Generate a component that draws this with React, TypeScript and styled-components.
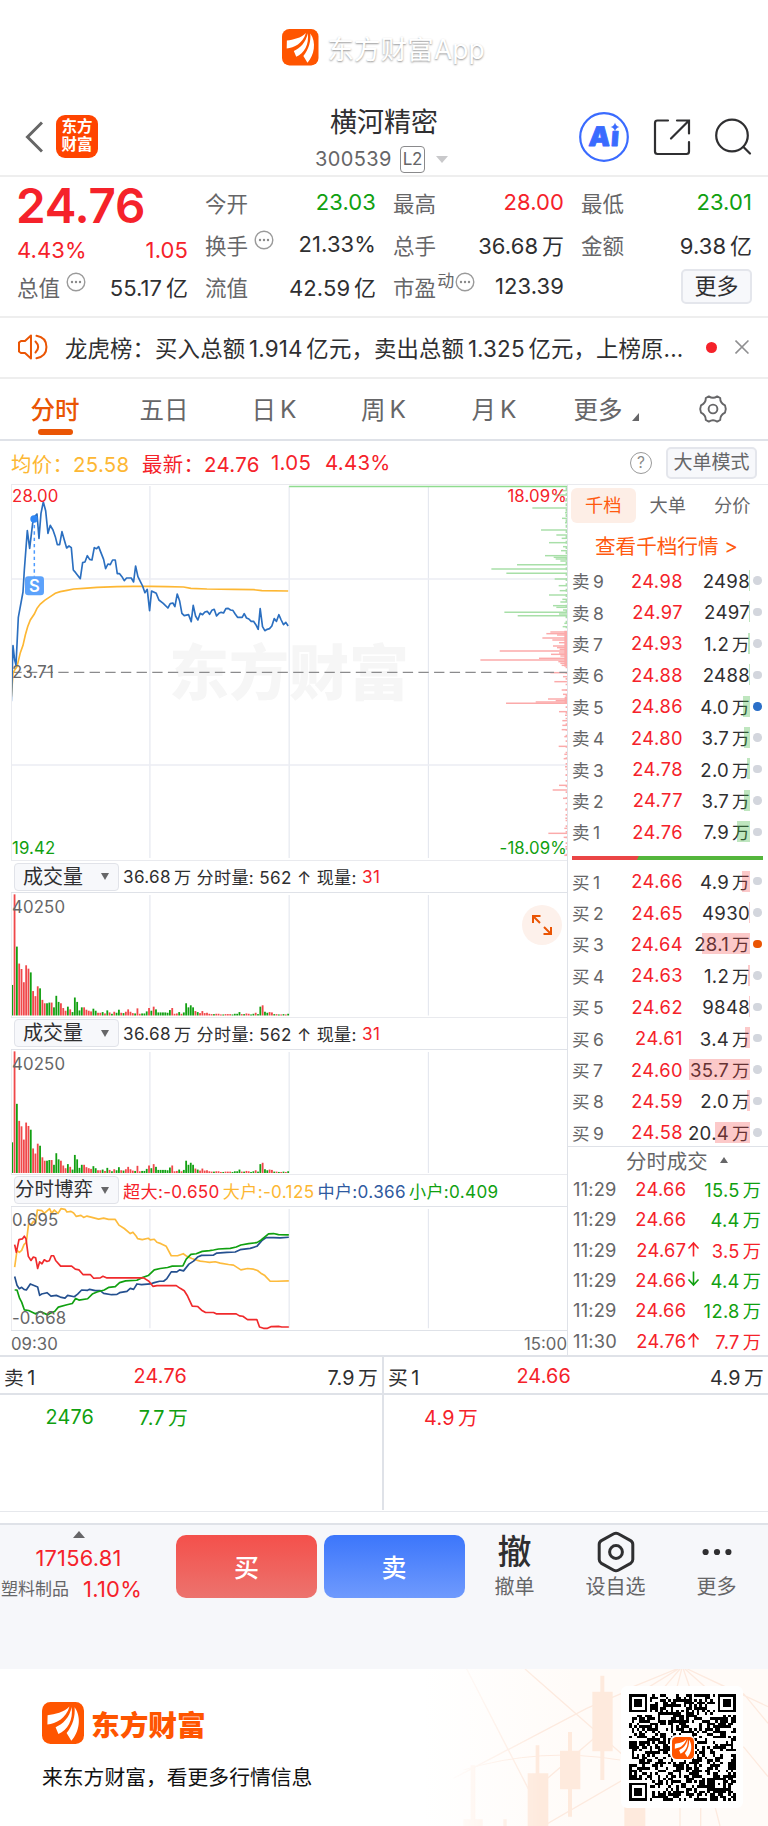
import React from 'react';
import styled, { createGlobalStyle } from 'styled-components';

const RED = '#f5222a';
const GREEN = '#10a010';
const GREY = '#666668';
const INK = '#2f2f31';
const LINE = '#dfe2e8';
const ORANGE = '#ea5504';
const BRAND = '#ff5500';

const Global = createGlobalStyle`
  *, *::before, *::after { box-sizing: border-box; }
  body {
    margin: 0;
    background: #fff;
    color: ${INK};
    font-family: Inter, "Noto Sans CJK SC", sans-serif;
    -webkit-font-smoothing: antialiased;
  }
`;

const Page = styled.main`
  width: 768px;
  height: 1826px;
  overflow: hidden;
  display: flex;
  flex-direction: column;
  white-space: nowrap;
`;

/* ---------- text helpers ---------- */

const Piece = styled.span<{ $gap: boolean }>`
  margin-left: ${(p) => (p.$gap ? '0.17em' : '0')};
`;

const Mixed = ({ text }: { text: string }) => (
  <>
    {text
      .split(/(?<=[\u4e00-\u9fa5])(?=[A-Z\d])|(?<=\d)(?=[\u4e00-\u9fa5])/)
      .map((part, i) => (
        <Piece key={i} $gap={i > 0}>
          {part}
        </Piece>
      ))}
  </>
);

const Triangle = styled.i<{ $up?: boolean; $w: number; $h: number; $color: string }>`
  display: block;
  flex: none;
  width: 0;
  height: 0;
  border-left: ${(p) => p.$w / 2}px solid transparent;
  border-right: ${(p) => p.$w / 2}px solid transparent;
  ${(p) => (p.$up ? 'border-bottom' : 'border-top')}: ${(p) => p.$h}px solid ${(p) => p.$color};
`;

/* ---------- brand ---------- */

const SwooshLogo = ({ size }: { size: number }) => (
  <svg width={size} height={size} viewBox="0 0 42 42" fill="none">
    <rect width="42" height="42" rx="8.5" fill={BRAND} />
    <g fill="#fff">
      <path d="M27.5 4.5C22 10.5 13 12 5.6 13.2L5.4 22.4C14 21.6 24 16.5 27.5 4.5Z" />
      <path d="M29.6 5C27.6 15.5 21 22 13.6 25.2L16.4 32C25.5 28 31.5 18 29.6 5Z" />
      <path d="M32.6 5.2C33.4 14 30.8 23.5 24.6 31L29.3 38.8C37 30.5 40 15.5 32.6 5.2Z" />
    </g>
  </svg>
);

const BrandBar = styled.header`
  flex: none;
  height: 95px;
  display: flex;
  align-items: center;
  gap: 9px;
  padding-left: 282px;
`;

const BrandName = styled.span`
  font-size: 26.5px;
  color: #fff;
  letter-spacing: 0.1px;
  text-shadow: 0 1px 2px rgba(0, 0, 0, 0.42);
`;

/* ---------- navigation ---------- */

const Nav = styled.nav`
  flex: none;
  height: 82px;
  border-bottom: 2px solid #eeeeee;
  display: grid;
  grid-template-columns: 250px 1fr 250px;
  align-items: center;
`;

const NavLeft = styled.div`
  display: flex;
  align-items: center;
  gap: 13px;
  padding: 3px 0 0 25px;
`;

const AppBadge = styled.div`
  width: 42px;
  height: 43px;
  border-radius: 9px;
  background: #ff4400;
  color: #fff;
  font-size: 15.5px;
  font-weight: 700;
  line-height: 18px;
  text-align: center;
  padding-top: 3px;
`;

const NavTitle = styled.div`
  text-align: center;
  padding-top: 10px;
`;

const StockName = styled.h1`
  margin: 0;
  font-size: 27px;
  font-weight: 400;
  line-height: 36px;
`;

const StockCode = styled.div`
  display: flex;
  align-items: center;
  height: 34px;
  padding: 2px 0 0 65px;
  font-size: 20px;
  color: ${GREY};
  letter-spacing: 0.4px;
`;

const LevelTag = styled.span`
  width: 25px;
  height: 27px;
  margin: 0 11px 0 8px;
  border: 1.5px solid #8a8a8c;
  border-radius: 4px;
  font-size: 17px;
  line-height: 25px;
  letter-spacing: -0.3px;
  text-align: center;
`;

const NavRight = styled.div`
  display: flex;
  align-items: center;
  justify-content: flex-end;
  gap: 23.5px;
  padding: 3px 16px 0 0;
`;

const AiIcon = () => (
  <svg width="50" height="50" viewBox="0 0 50 50">
    <circle cx="25" cy="25" r="23.8" fill="none" stroke="#3a6bff" strokeWidth="2.2" />
    <text
      x="10"
      y="33.8"
      fontFamily="Inter"
      fontSize="27"
      fontWeight="900"
      letterSpacing="1"
      fill="#3a6bff"
      stroke="#3a6bff"
      strokeWidth="0.9"
      strokeLinejoin="round"
      transform="skewX(-4) translate(1.5 0)"
    >
      Aı
    </text>
    <path d="M36 10.5Q36.8 14.2 40.5 15Q36.8 15.8 36 19.5Q35.2 15.8 31.5 15Q35.2 14.2 36 10.5Z" fill="#3a6bff" />
  </svg>
);

const ShareIcon = () => (
  <svg width="38" height="38" viewBox="0 0 38 38" fill="none" stroke="#2f2f31" strokeWidth="2.2" strokeLinecap="round">
    <path d="M15 2.5H4.5Q2 2.5 2 5V33.5Q2 36 4.5 36H33.5Q36 36 36 33.5V24" />
    <path d="M24 2.5H36V15.5M35.5 3L18 20.5" />
  </svg>
);

const SearchIcon = () => (
  <svg width="38" height="38" viewBox="0 0 38 38" fill="none" stroke="#2f2f31" strokeWidth="2.2" strokeLinecap="round">
    <circle cx="18" cy="17.5" r="15.8" />
    <path d="M29.5 29L36 35.5" />
  </svg>
);

/* ---------- quote ---------- */

const Quote = styled.section`
  flex: none;
  height: 141px;
  border-bottom: 2px solid #eeeeee;
  padding: 5px 16px 0 17px;
  display: grid;
  grid-template-columns: repeat(4, 171px);
  column-gap: 17px;
`;

const QuoteColumn = styled.div`
  display: flex;
  flex-direction: column;
  margin-top: -1px;
`;

const Price = styled.div`
  height: 49px;
  line-height: 50px;
  font-size: 47.6px;
  font-weight: 600;
  letter-spacing: -0.2px;
  margin-left: -1px;
  color: ${RED};
`;

const QuoteRow = styled.div<{ $h?: number; $color?: string }>`
  height: ${(p) => p.$h ?? 42}px;
  display: flex;
  align-items: center;
  justify-content: space-between;
  font-size: 22px;
  letter-spacing: 0.1px;
  color: ${(p) => p.$color ?? INK};
`;

const Label = styled.span`
  display: flex;
  align-items: center;
  color: ${GREY};
  font-size: 21.5px;
`;

const Sup = styled.sup`
  font-size: 17px;
  line-height: 20px;
  margin-left: 1px;
  align-self: flex-start;
`;

const DotsSvg = styled.svg`
  margin: 0 0 8px 6px;
`;

const DotsHint = () => (
  <DotsSvg width="20" height="20" viewBox="0 0 20 20">
    <circle cx="10" cy="10" r="8.8" fill="none" stroke="#9a9a9a" strokeWidth="1.4" />
    <g fill="#8a8a8a">
      <circle cx="6" cy="10" r="1.2" />
      <circle cx="10" cy="10" r="1.2" />
      <circle cx="14" cy="10" r="1.2" />
    </g>
  </DotsSvg>
);

const TightHint = styled.span`
  display: flex;
  margin-left: -5px;
`;

const SoftButton = styled.button<{ $w: number; $h: number; $size: number; $color?: string }>`
  width: ${(p) => p.$w}px;
  height: ${(p) => p.$h}px;
  padding: 0;
  border: 2px solid #e4e6ec;
  border-radius: 5px;
  background: #f7f8fb;
  color: ${(p) => p.$color ?? INK};
  font: inherit;
  font-size: ${(p) => p.$size}px;
  line-height: 1;
`;

/* ---------- news ---------- */

const News = styled.section`
  flex: none;
  height: 61px;
  border-bottom: 2px solid #eeeeee;
  display: flex;
  align-items: center;
  padding: 0 19px 1px 17px;
`;

const NewsText = styled.p`
  margin: 0 0 0 17px;
  width: 622px;
  font-size: 22.4px;
  letter-spacing: 0.14px;
`;

const NewsDot = styled.i`
  width: 11px;
  height: 11px;
  border-radius: 50%;
  background: ${RED};
  margin: 0 18px 0 20px;
`;

/* ---------- tabs ---------- */

const Tabs = styled.div`
  flex: none;
  height: 62px;
  border-bottom: 2px solid ${LINE};
  display: flex;
  padding-left: 1px;
`;

const Tab = styled.div<{ $active?: boolean; $w: number }>`
  position: relative;
  width: ${(p) => p.$w}px;
  display: flex;
  align-items: center;
  justify-content: center;
  padding-bottom: 1px;
  font-size: 24.5px;
  font-weight: ${(p) => (p.$active ? 500 : 400)};
  color: ${(p) => (p.$active ? ORANGE : GREY)};

  &::after {
    content: '';
    display: ${(p) => (p.$active ? 'block' : 'none')};
    position: absolute;
    bottom: 4px;
    left: 50%;
    width: 35px;
    height: 6px;
    margin-left: -17.5px;
    border-radius: 3px;
    background: ${ORANGE};
  }
`;

const CornerMark = styled.svg`
  margin: 16px 0 0 9px;
`;

const GearIcon = () => (
  <svg width="30" height="30" viewBox="0 0 30 30" fill="none" stroke={GREY} strokeWidth="1.9" strokeLinejoin="round">
    <circle cx="15" cy="15" r="4.4" />
    <path d="M10.8 2.4Q15 5.2 19.2 2.4L22.2 4Q22 8.8 27 11.4Q28.6 15 27 18.6Q22 21.2 22.2 26L19.2 27.6Q15 24.8 10.8 27.6L7.8 26Q8 21.2 3 18.6Q1.4 15 3 11.4Q8 8.8 7.8 4Z" />
  </svg>
);

/* ---------- average line ---------- */

const InfoBar = styled.div`
  flex: none;
  height: 43px;
  display: flex;
  align-items: center;
  padding: 0 11px;
  font-size: 20.4px;
  letter-spacing: 0.3px;
`;

const InfoItem = styled.span<{ $color: string; $w: number }>`
  width: ${(p) => p.$w}px;
  color: ${(p) => p.$color};
`;

const InfoRight = styled.div`
  margin-left: auto;
  display: flex;
  align-items: center;
  gap: 14px;
  letter-spacing: 0;
`;

const HelpIcon = styled.span`
  width: 22px;
  height: 22px;
  border: 1.5px solid #9a9a9a;
  border-radius: 50%;
  color: #8a8a8a;
  font-size: 15.5px;
  line-height: 19px;
  text-align: center;
`;

/* ---------- market area ---------- */

const Market = styled.section`
  flex: none;
  height: 873px;
  display: flex;
  border-bottom: 2px solid ${LINE};
`;

const Charts = styled.div`
  width: 557px;
  margin-left: 11px;
  border-top: 1.5px solid #e9eaee;
  border-right: 1px solid ${LINE};
`;

const Plot = styled.div<{ $h: number }>`
  position: relative;
  height: ${(p) => p.$h}px;
  border-left: 1px solid #ebecf0;

  > svg {
    display: block;
    width: 100%;
    height: 100%;
  }
`;

const ChartLayer = styled.div`
  position: relative;
  height: 100%;

  > svg {
    display: block;
    width: 100%;
    height: 100%;
  }
`;

const AxisLabel = styled.span<{ $color?: string; $right?: boolean; $bottom?: boolean; $top?: number }>`
  position: absolute;
  ${(p) => (p.$right ? 'right: 0' : 'left: 0')};
  ${(p) => (p.$bottom ? 'bottom: 2px' : `top: ${p.$top ?? 1}px`)};
  font-size: 16.8px;
  line-height: 20px;
  letter-spacing: 0.15px;
  color: ${(p) => p.$color ?? GREY};
`;

const Watermark = styled.span`
  position: absolute;
  left: 157px;
  top: 144px;
  font-size: 60px;
  line-height: 88px;
  font-weight: 900;
  color: #f6f6f6;
`;

const ExpandButton = styled.span`
  position: absolute;
  right: 5px;
  top: 12px;
  width: 40px;
  height: 40px;
  border-radius: 50%;
  background: #fdf1eb;
  display: grid;
  place-items: center;
`;

const IndicatorBar = styled.div`
  height: 33px;
  border-bottom: 1.5px solid ${LINE};
  border-top: 1px solid #e9eaee;
  display: flex;
  align-items: center;
  padding-left: 3px;
  font-size: 17.1px;
  letter-spacing: 0.35px;
`;

const Picker = styled.span<{ $wide?: boolean }>`
  width: 105px;
  height: 28px;
  margin-right: 4px;
  border: 1.5px solid #e1e3e9;
  border-radius: 4px;
  background: #f7f8fb;
  display: flex;
  align-items: center;
  justify-content: space-between;
  padding: 0 9px 0 ${(p) => (p.$wide ? 0 : 8)}px;
  font-size: ${(p) => (p.$wide ? 19.5 : 20)}px;
  letter-spacing: 0;
  line-height: 1;
`;

const Tint = styled.span<{ $color: string; $gap?: number }>`
  color: ${(p) => p.$color};
  margin-right: ${(p) => p.$gap ?? 0}px;
`;

const TimeAxis = styled.div`
  display: flex;
  justify-content: space-between;
  height: 26px;
  line-height: 26px;
  border-top: 1.5px solid ${LINE};
  font-size: 16.8px;
  color: ${GREY};
`;

const pricePath =
  '33,664 38,497 43,540 47,555 54,412 68,336 72,270 81,152 88,205 97,130 104,108 110,102 116,175 122,100 129,66 136,92 143,160 150,136 158,150 165,170 171,194 178,194 185,155 192,180 199,204 206,198 213,203 219,270 226,278 240,296 247,248 254,246 261,227 268,238 275,240 282,203 289,206 295,200 302,218 310,238 316,266 323,252 330,254 337,240 345,240 351,281 358,281 365,290 372,302 379,294 393,294 400,306 406,258 413,290 420,304 427,318 434,338 441,328 448,392 454,333 468,340 476,360 489,370 503,384 510,371 518,369 524,380 531,342 538,362 545,400 552,407 565,404 573,425 579,376 586,408 593,420 600,400 607,404 614,396 621,394 628,403 635,391 642,388 649,408 656,400 663,397 670,399 677,386 684,385 691,390 698,391 705,402 712,412 726,412 732,401 739,414 746,417 753,424 760,424 767,434 774,448 780,386 787,440 794,452 801,448 808,446 815,438 822,416 829,424 836,404 843,420 850,434 857,427 864,438';

const averagePath =
  '33,650 38,580 43,570 50,560 60,518 68,496 75,465 82,440 90,420 102,402 110,385 120,372 133,361 150,350 165,340 180,335 200,331 220,327 250,325 290,322 350,320 400,319 450,319 500,320 550,321 572,325 620,327 700,328 760,329 785,332 864,333';

// [y, length] of resting orders along the right edge
const askDepth: [number, number][] = [
  [45, 38], [32, 20], [84, 104], [115, 15], [150, 78], [165, 32], [188, 54], [212, 18], [227, 66], [232, 40], [237, 34], [243, 20],
  [254, 150], [267, 227], [280, 182], [297, 37], [317, 25], [332, 22], [345, 54], [358, 14], [366, 20], [377, 42], [382, 32], [390, 12],
  [397, 188], [402, 24], [407, 148], [440, 13], [430, 8], [200, 12], [175, 16], [62, 6], [98, 6], [128, 6],
];
const bidDepth: [number, number][] = [
  [456, 50], [461, 62], [465, 30], [474, 74], [480, 44], [488, 24], [498, 42], [503, 30], [508, 22], [513, 202], [519, 24], [523, 48],
  [528, 20], [535, 84], [540, 260], [545, 26], [550, 20], [556, 16], [578, 50], [590, 12], [605, 38], [630, 16], [643, 12], [657, 57],
  [662, 34], [666, 94], [670, 183], [695, 24], [706, 6], [722, 14], [736, 14], [749, 16], [770, 8], [799, 25], [823, 8], [836, 10],
  [860, 6], [885, 4], [916, 24], [930, 43], [955, 12], [990, 5], [1015, 5], [1045, 8], [1060, 56], [1072, 10], [1100, 5], [1126, 8],
];

const Grid = ({ top, bottom }: { top: number; bottom: number }) => (
  <g stroke="#e5e8ef" strokeWidth="3.5">
    <path d={`M449 ${top}V${bottom}M867 ${top}V${bottom}M1285 ${top}V${bottom}`} />
  </g>
);

const PriceChart = () => (
  <svg viewBox="35 15 1666 1125" preserveAspectRatio="none" fill="none">
    <Grid top={18} bottom={1134} />
    <path d="M33 297H1701M33 855H1701" stroke="#ebedf3" strokeWidth="4" />
    <path d="M867 19.5H1701" stroke="#8fdc8f" strokeWidth="4" />
    <g strokeWidth="4.4" stroke="#a8dfa8">
      {askDepth.map(([y, w], i) => (
        <path key={i} d={`M${1701 - w} ${y}H1701`} />
      ))}
      <path d="M1699 22V445" strokeDasharray="9 7" />
    </g>
    <g strokeWidth="4.4" stroke="#fbaaaa">
      {bidDepth.map(([y, w], i) => (
        <path key={i} d={`M${1701 - w} ${y}H1701`} />
      ))}
      <path d="M1697 452V560M1698 650V672" strokeWidth="8" />
      <path d="M1699 560V1125" strokeDasharray="5 12" />
    </g>
    <path d="M33 577H1701" stroke="#8b8b8d" strokeWidth="4" strokeDasharray="31 16" />
    <polyline points={averagePath} stroke="#fdb733" strokeWidth="5" />
    <path d="M102 116V290" stroke="#4d9bff" strokeWidth="4.5" strokeDasharray="10 9" />
    <polyline points={pricePath} stroke="#2b6fc0" strokeWidth="5" strokeLinejoin="round" />
    <circle cx="101" cy="117" r="11" fill="#2f87f5" />
    <rect x="74" y="289" width="57" height="57" rx="10" fill="#5ca2fb" />
    <text x="102.5" y="335" textAnchor="middle" fontFamily="Inter" fontSize="50" fontWeight="600" fill="#fff">
      S
    </text>
  </svg>
);

const volume: string[] =
  `90g 357r 203g 153r 137r 98r 148r 138r 127g 72r 57r 86r 80g 46r 36r 36g 38g 38r 24g 58g 40g 36r 22r 14r 26g 18r 10g 53g 40g 15g
  24g 24r 17r 14r 12r 20g 14g 8r 8r 10g 6r 15g 9r 5g 11r 8g 17g 8r 7g 11r 18r 11r 7r 6g 21r 5r 6g 6g 12g 22r
  14g 26r 18g 9g 9g 9g 9g 8g 16g 22r 5r 6r 10g 5r 9g 36g 24g 30g 24g 13r 10g 7r 13r 7r 8r 5r 4r 4g 5r 5r
  3r 3g 4r 4r 4r 3g 5g 5g 10g 4r 4g 6r 5r 3g 5g 8r 4g 26g 30r 11g 8g 10r 9r 4g 4r 3g 3r 4g 3r 5g`
    .trim()
    .split(/\s+/);

const VolumeChart = () => (
  <svg viewBox="35 104 1666 364" preserveAspectRatio="none" fill="none">
    <Grid top={110} bottom={465} />
    {volume.map((v, i) => {
      const h = parseInt(v, 10);
      return (
        <rect key={i} x={33 + i * 6.96} y={465 - h} width="5.4" height={h} fill={v.endsWith('r') ? '#f0484a' : '#12a012'} />
      );
    })}
  </svg>
);

const flows: { color: string; points: string }[] = [
  {
    color: '#fdbb3c',
    points:
      '43,1222 50,1172 57,1178 64,1172 71,1155 78,1148 85,1092 92,1096 99,1086 106,1090 111,1052 125,1054 132,1062 148,1048 154,1062 162,1052 173,1062 182,1048 194,1050 200,1058 212,1056 220,1061 228,1071 242,1068 250,1074 260,1070 275,1074 295,1079 310,1076 325,1080 345,1080 356,1097 372,1107 390,1122 398,1118 408,1130 412,1137 426,1140 444,1136 450,1141 462,1139 470,1148 482,1152 498,1160 513,1188 532,1188 549,1182 560,1190 575,1196 592,1202 600,1204 615,1206 628,1208 645,1206 660,1210 685,1214 700,1216 722,1230 742,1226 760,1228 772,1232 782,1240 794,1247 810,1264 830,1264 866,1263',
  },
  {
    color: '#24508f',
    points:
      '43,1250 50,1276 57,1286 64,1282 71,1288 78,1290 90,1272 112,1281 118,1306 124,1302 140,1298 152,1308 168,1306 180,1311 194,1314 202,1306 222,1310 232,1302 244,1290 262,1291 268,1288 285,1292 300,1292 310,1300 334,1304 350,1303 358,1298 380,1294 390,1285 400,1288 410,1272 424,1274 450,1272 462,1268 478,1264 490,1264 500,1256 513,1236 530,1236 538,1230 550,1233 566,1213 580,1204 592,1192 604,1187 640,1186 650,1180 680,1178 705,1177 720,1170 750,1166 770,1160 785,1143 798,1134 820,1134 840,1135 866,1133',
  },
  {
    color: '#10a010',
    points:
      '43,1290 50,1290 58,1315 64,1326 72,1349 85,1351 105,1361 120,1354 142,1364 152,1358 163,1354 174,1341 200,1334 216,1330 226,1315 236,1320 262,1316 276,1302 290,1296 312,1290 326,1282 345,1280 358,1268 376,1263 410,1261 424,1254 444,1247 462,1230 480,1226 502,1223 516,1219 548,1218 558,1198 572,1184 588,1182 606,1175 628,1173 640,1171 655,1168 690,1166 708,1162 722,1156 745,1152 770,1149 782,1142 805,1123 820,1122 835,1125 866,1126',
  },
  {
    color: '#f02a2c',
    points:
      '43,1155 48,1178 56,1140 66,1138 72,1130 77,1138 84,1190 92,1202 99,1192 106,1194 112,1226 118,1206 125,1212 132,1200 140,1205 147,1203 153,1188 160,1188 166,1202 181,1219 214,1219 225,1228 236,1230 248,1244 270,1244 280,1255 300,1254 308,1249 320,1254 430,1254 446,1264 458,1279 470,1277 528,1277 540,1285 552,1292 562,1308 576,1338 592,1339 604,1350 616,1357 640,1357 648,1361 708,1361 718,1367 728,1368 742,1378 770,1378 778,1400 790,1404 802,1404 812,1399 835,1398 845,1400 866,1400',
  },
];

const FlowChart = () => (
  <svg viewBox="35 1043 1666 366" preserveAspectRatio="none" fill="none">
    <Grid top={1049} bottom={1404} />
    {flows.map((f) => (
      <polyline key={f.color} points={f.points} stroke={f.color} strokeWidth="5" strokeLinejoin="round" />
    ))}
  </svg>
);

/* ---------- order book ---------- */

const Book = styled.aside`
  width: 200px;
  border-top: 1px solid #e9eaee;
`;

const BookTabs = styled.div`
  display: flex;
  padding: 3px 0 0 3px;
  height: 39px;
`;

const BookTab = styled.span<{ $active?: boolean }>`
  width: 64.5px;
  height: 35px;
  line-height: 34px;
  border-radius: 6px;
  text-align: center;
  font-size: 18.2px;
  color: ${(p) => (p.$active ? '#ff5a10' : GREY)};
  background: ${(p) => (p.$active ? '#fdeee6' : 'none')};
`;

const BookLink = styled.div`
  height: 41px;
  line-height: 45px;
  padding-left: 27px;
  font-size: 20.6px;
  color: #ff5a10;
`;

const BookRow = styled.div`
  position: relative;
  height: 31.4px;
  display: grid;
  grid-template-columns: 40px 75px 67px 1fr;
  align-items: center;
  font-size: 18.3px;
  letter-spacing: 0.45px;
`;

const Side = styled.span`
  color: ${GREY};
  padding-left: 4px;
  font-size: 17.5px;
`;

const BookPrice = styled.span`
  color: ${RED};
  text-align: right;
`;

const Amount = styled.span`
  text-align: right;
  margin-left: -20px;
  letter-spacing: 0.3px;
  font-size: 18.6px;

  span + span {
    font-size: 17.6px;
  }
`;

const Depth = styled.i<{ $w: number; $buy: boolean }>`
  position: absolute;
  right: 18px;
  top: 5px;
  width: ${(p) => p.$w}px;
  height: 21px;
  background: ${(p) => (p.$buy ? 'rgba(245, 60, 60, 0.28)' : 'rgba(60, 180, 60, 0.33)')};
`;

const Dot = styled.i<{ $color: string }>`
  width: 8.5px;
  height: 8.5px;
  margin-left: 3px;
  border-radius: 50%;
  background: ${(p) => p.$color};
`;

const RatioBar = styled.div`
  height: 4px;
  margin: 8px 5px 6px 4px;
  background: linear-gradient(115deg, #ea4545 0 60px, #54b63c 61px);
`;

const sells: [string, string, number][] = [
  ['24.98', '2498', 1], ['24.97', '2497', 1], ['24.93', '1.2万', 2], ['24.88', '2488', 1], ['24.86', '4.0万', 7],
  ['24.80', '3.7万', 6], ['24.78', '2.0万', 3], ['24.77', '3.7万', 6], ['24.76', '7.9万', 13],
];
const buys: [string, string, number][] = [
  ['24.66', '4.9万', 8], ['24.65', '4930', 1], ['24.64', '28.1万', 48], ['24.63', '1.2万', 2], ['24.62', '9848', 1.5],
  ['24.61', '3.4万', 5.5], ['24.60', '35.7万', 61], ['24.59', '2.0万', 3], ['24.58', '20.4万', 35],
];
const dotColors: Record<string, string> = { '24.86': '#2b6fc8', '24.64': ORANGE };

const BookSide = ({ rows, buy }: { rows: [string, string, number][]; buy: boolean }) => (
  <>
    {rows.map(([price, amount, w], i) => (
      <BookRow key={price}>
        <Side>
          <Mixed text={buy ? `买${i + 1}` : `卖${9 - i}`} />
        </Side>
        <BookPrice>{price}</BookPrice>
        <Amount>
          <Mixed text={amount} />
        </Amount>
        <Dot $color={dotColors[price] ?? '#d3d6dd'} />
        <Depth $w={w} $buy={buy} />
      </BookRow>
    ))}
  </>
);

const TradesHead = styled.div`
  margin-top: -2px;
  height: 27.5px;
  border-top: 1.5px solid ${LINE};
  display: flex;
  align-items: center;
  padding-left: 58px;
  gap: 12px;
  font-size: 20.4px;
  color: ${GREY};
`;

const TradeRow = styled.div`
  height: 30.4px;
  display: grid;
  grid-template-columns: 60px 58.5px 13px 62px;
  align-items: center;
  font-size: 18.3px;
  letter-spacing: 0.35px;
`;

const TradeTime = styled.span`
  padding-left: 5px;
  letter-spacing: 0.2px;
  color: ${GREY};
`;

const TradeCell = styled.span<{ $color: string }>`
  color: ${(p) => p.$color};
  text-align: right;
`;

const Arrow = ({ up, color }: { up: boolean; color: string }) => (
  <svg width="13" height="16" viewBox="0 0 13 16" fill="none" stroke={color} strokeWidth="1.6">
    <path d={up ? 'M6.5 15.5V2M1.5 7.5L6.5 2L11.5 7.5' : 'M6.5 .5V14M1.5 8.5L6.5 14L11.5 8.5'} />
  </svg>
);

const trades: [string, string, string, string, string][] = [
  ['11:29', '24.66', '', '15.5万', GREEN],
  ['11:29', '24.66', '', '4.4万', GREEN],
  ['11:29', '24.67', 'up', '3.5万', RED],
  ['11:29', '24.66', 'down', '4.4万', GREEN],
  ['11:29', '24.66', '', '12.8万', GREEN],
  ['11:30', '24.76', 'up', '7.7万', RED],
];

/* ---------- queue ---------- */

const Queue = styled.section`
  flex: none;
  height: 155px;
  display: grid;
  grid-template-columns: 384px 384px;
  border-bottom: 1px solid #e6e8ec;
`;

const QueueSide = styled.div<{ $first?: boolean }>`
  height: 153px;
  border-right: ${(p) => (p.$first ? `2px solid ${LINE}` : 'none')};
`;

const QueueHead = styled.div`
  height: 38px;
  border-bottom: 2px solid ${LINE};
  display: grid;
  grid-template-columns: 80px 103px 1fr;
  align-items: center;
  padding: 2px 4px 0 4px;
  font-size: 19.8px;
  letter-spacing: 0.2px;
  text-align: right;

  > :first-child {
    text-align: left;
  }
`;

const QueueList = styled.div<{ $color: string }>`
  display: grid;
  grid-template-columns: 94px 94px;
  height: 43px;
  align-items: center;
  text-align: right;
  font-size: 19.8px;
  letter-spacing: 0.2px;
  color: ${(p) => p.$color};
`;

/* ---------- bottom bar ---------- */

const Spacer = styled.div`
  flex: none;
  height: 11px;
`;

const ActionBar = styled.section`
  flex: none;
  height: 146px;
  border-top: 2px solid ${LINE};
  background: #f6f7fa;
  display: flex;
`;

const IndexBox = styled.div`
  width: 176px;
  padding-top: 6px;
`;

const IndexValue = styled.div`
  width: 157px;
  display: flex;
  flex-direction: column;
  align-items: center;
  font-size: 21.8px;
  letter-spacing: 0.25px;
  line-height: 24px;
  gap: 8px;
  color: ${RED};
`;

const IndexName = styled.div`
  display: flex;
  align-items: center;
  gap: 14px;
  margin-top: 5px;
  padding-left: 1px;
  font-size: 17px;
  line-height: 28px;
  color: ${GREY};
`;

const IndexChange = styled.span`
  font-size: 22px;
  letter-spacing: 0.25px;
  color: ${RED};
`;

const TradeButton = styled.button<{ $from: string; $to: string }>`
  width: 141px;
  height: 63px;
  margin: 10px 6.5px 0 0;
  padding: 0 0 2px;
  border: 0;
  border-radius: 10px;
  background: linear-gradient(${(p) => p.$from}, ${(p) => p.$to});
  color: #fff;
  font: inherit;
  font-size: 25px;
  font-weight: 500;
`;

const Tool = styled.div<{ $w: number }>`
  width: ${(p) => p.$w}px;
  padding-top: 5px;
  text-align: center;
  font-size: 20px;
  line-height: 27px;
  color: ${GREY};
`;

const ToolIcon = styled.div`
  height: 44px;
  display: grid;
  place-items: center;
  font-size: 34px;
  font-weight: 500;
  line-height: 42px;
  color: ${INK};
`;

/* ---------- footer ---------- */

const Footer = styled.footer`
  position: relative;
  flex: none;
  height: 157px;
  display: flex;
  justify-content: space-between;
  padding: 17px 25px 0 42px;
  background: linear-gradient(90deg, #fff 55%, #fffbf8 75%);
`;

const FooterArt = styled.svg`
  position: absolute;
  right: 0;
  top: 0;
  -webkit-mask-image: linear-gradient(90deg, transparent 12%, #000 38%);
  mask-image: linear-gradient(90deg, transparent 12%, #000 38%);
`;

const FooterBrand = styled.div`
  padding-top: 16px;
  font-size: 20.8px;
  color: #111;
`;

const FooterLogo = styled.div`
  display: flex;
  align-items: center;
  gap: 7px;
  height: 42px;
  margin-bottom: 17px;
  font-size: 28.7px;
  font-weight: 900;
  color: ${BRAND};
`;

const QrCard = styled.div`
  position: relative;
  width: 122px;
  height: 122px;
  padding: 7.5px;
  border-radius: 6px;
  background: #fff;
`;

const QrLogo = styled.span`
  position: absolute;
  left: 49px;
  top: 49px;
  width: 25px;
  height: 25px;
  padding: 1.5px;
  border-radius: 6px;
  background: #fff;
  line-height: 0;
`;

const QR_SIZE = 41;

const finder = (r: number, c: number): boolean | null => {
  for (const [y, x] of [[0, 0], [0, 34], [34, 0]]) {
    const dy = r - y;
    const dx = c - x;
    if (dy >= -1 && dy <= 7 && dx >= -1 && dx <= 7) {
      const d = Math.max(Math.abs(dy - 3), Math.abs(dx - 3));
      return d === 3 || d <= 1;
    }
  }
  const a = Math.max(Math.abs(r - 34), Math.abs(c - 34));
  if (a <= 2) return a !== 1;
  if (r === 6) return c % 2 === 0;
  if (c === 6) return r % 2 === 0;
  return null;
};

const qrPath = (() => {
  let seed = 20477;
  let d = '';
  for (let r = 0; r < QR_SIZE; r++) {
    for (let c = 0; c < QR_SIZE; c++) {
      seed = (seed * 1103515245 + 12345) % 2147483648;
      if (finder(r, c) ?? seed / 2147483648 < 0.5) d += `M${c} ${r}h1v1h-1z`;
    }
  }
  return d;
})();

const App = () => (
  <>
    <Global />
    <Page>
      <BrandBar>
        <SwooshLogo size={36.5} />
        <BrandName>东方财富App</BrandName>
      </BrandBar>

      <Nav>
        <NavLeft>
          <svg width="18" height="32" viewBox="0 0 18 32" fill="none" stroke="#666" strokeWidth="3">
            <path d="M17 1.5L2.5 16L17 30.5" />
          </svg>
          <AppBadge>
            东方
            <br />
            财富
          </AppBadge>
        </NavLeft>
        <NavTitle>
          <StockName>横河精密</StockName>
          <StockCode>
            300539
            <LevelTag>L2</LevelTag>
            <Triangle $w={13} $h={7} $color="#c9c9cb" />
          </StockCode>
        </NavTitle>
        <NavRight>
          <AiIcon />
          <ShareIcon />
          <SearchIcon />
        </NavRight>
      </Nav>

      <Quote>
        <QuoteColumn>
          <Price>24.76</Price>
          <QuoteRow $h={40} $color={RED}>
            <span>4.43%</span>
            <span>1.05</span>
          </QuoteRow>
          <QuoteRow $h={32}>
            <Label>
              总值
              <DotsHint />
            </Label>
            <span>
              <Mixed text="55.17亿" />
            </span>
          </QuoteRow>
        </QuoteColumn>
        <QuoteColumn>
          <QuoteRow>
            <Label>今开</Label>
            <Tint $color={GREEN}>23.03</Tint>
          </QuoteRow>
          <QuoteRow>
            <Label>
              换手
              <DotsHint />
            </Label>
            <span>21.33%</span>
          </QuoteRow>
          <QuoteRow>
            <Label>流值</Label>
            <span>
              <Mixed text="42.59亿" />
            </span>
          </QuoteRow>
        </QuoteColumn>
        <QuoteColumn>
          <QuoteRow>
            <Label>最高</Label>
            <Tint $color={RED}>28.00</Tint>
          </QuoteRow>
          <QuoteRow>
            <Label>总手</Label>
            <span>
              <Mixed text="36.68万" />
            </span>
          </QuoteRow>
          <QuoteRow>
            <Label>
              市盈<Sup>动</Sup>
              <TightHint>
                <DotsHint />
              </TightHint>
            </Label>
            <span>123.39</span>
          </QuoteRow>
        </QuoteColumn>
        <QuoteColumn>
          <QuoteRow>
            <Label>最低</Label>
            <Tint $color={GREEN}>23.01</Tint>
          </QuoteRow>
          <QuoteRow>
            <Label>金额</Label>
            <span>
              <Mixed text="9.38亿" />
            </span>
          </QuoteRow>
          <QuoteRow>
            <span />
            <SoftButton $w={71} $h={35} $size={22}>
              更多
            </SoftButton>
          </QuoteRow>
        </QuoteColumn>
      </Quote>

      <News>
        <svg width="31" height="26" viewBox="0 0 31 26" fill="none" stroke={ORANGE} strokeWidth="2" strokeLinejoin="round" strokeLinecap="round">
          <path d="M2 8.5L4 7H8L14 1.5V24.5L8 19H4L2 17.5Z" />
          <path d="M18.5 7.5Q24 13 18.5 18.5M19.5 1.8Q29.5 3.5 29.5 13T19.5 24.2" />
        </svg>
        <NewsText>
          <Mixed text="龙虎榜：买入总额1.914亿元，卖出总额1.325亿元，上榜原..." />
        </NewsText>
        <NewsDot />
        <svg width="14" height="14" viewBox="0 0 14 14" stroke="#8f8f91" strokeWidth="1.6">
          <path d="M.5 .5L13.5 13.5M13.5 .5L.5 13.5" />
        </svg>
      </News>

      <Tabs>
        <Tab $w={108} $active>
          分时
        </Tab>
        <Tab $w={110}>五日</Tab>
        <Tab $w={110}>
          <Mixed text="日K" />
        </Tab>
        <Tab $w={109}>
          <Mixed text="周K" />
        </Tab>
        <Tab $w={112}>
          <Mixed text="月K" />
        </Tab>
        <Tab $w={112}>
          更多
          <CornerMark width="7" height="8" viewBox="0 0 7 8">
            <path d="M7 0V8H0Z" fill={GREY} />
          </CornerMark>
        </Tab>
        <Tab $w={101}>
          <GearIcon />
        </Tab>
      </Tabs>

      <InfoBar>
        <InfoItem $color="#fdb733" $w={131}>
          均价：25.58
        </InfoItem>
        <InfoItem $color={RED} $w={129}>
          最新：24.76
        </InfoItem>
        <InfoItem $color={RED} $w={54}>
          1.05
        </InfoItem>
        <InfoItem $color={RED} $w={70}>
          4.43%
        </InfoItem>
        <InfoRight>
          <HelpIcon>?</HelpIcon>
          <SoftButton $w={91} $h={32} $size={19} $color={GREY}>
            大单模式
          </SoftButton>
        </InfoRight>
      </InfoBar>

      <Market>
        <Charts>
          <Plot $h={375}>
            <Watermark>东方财富</Watermark>
            <ChartLayer>
              <PriceChart />
            </ChartLayer>
            <AxisLabel $color={RED}>28.00</AxisLabel>
            <AxisLabel $color={RED} $right>
              18.09%
            </AxisLabel>
            <AxisLabel $top={177}>23.71</AxisLabel>
            <AxisLabel $color={GREEN} $bottom>
              19.42
            </AxisLabel>
            <AxisLabel $color={GREEN} $right $bottom>
              -18.09%
            </AxisLabel>
          </Plot>
          {[0, 1].map((n) => (
            <React.Fragment key={n}>
              <IndicatorBar>
                <Picker>
                  成交量
                  <Triangle $w={8} $h={7} $color={GREY} />
                </Picker>
                <Mixed text="36.68万 分时量: 562 ↑ 现量:" />
                &nbsp;<Tint $color={RED}>31</Tint>
              </IndicatorBar>
              <Plot $h={n === 0 ? 123.5 : 124}>
                <VolumeChart />
                <AxisLabel $top={4}>40250</AxisLabel>
                {n === 0 && (
                  <ExpandButton>
                    <svg width="22" height="22" viewBox="0 0 22 22" fill="none" stroke={ORANGE} strokeWidth="2">
                      <path d="M2 9V2H9.5M2.5 2.5L9 9M20 13V20H12.5M19.5 19.5L13 13" />
                    </svg>
                  </ExpandButton>
                )}
              </Plot>
            </React.Fragment>
          ))}
          <IndicatorBar>
            <Picker $wide>
              分时博弈
              <Triangle $w={8} $h={7} $color={GREY} />
            </Picker>
            <Tint $color={RED} $gap={3}>
              超大:-0.650
            </Tint>
            <Tint $color="#fdb733" $gap={3}>
              大户:-0.125
            </Tint>
            <Tint $color="#2f5aa0" $gap={3}>
              中户:0.366
            </Tint>
            <Tint $color={GREEN}>小户:0.409</Tint>
          </IndicatorBar>
          <Plot $h={123}>
            <FlowChart />
            <AxisLabel $top={3}>0.695</AxisLabel>
            <AxisLabel $bottom>-0.668</AxisLabel>
          </Plot>
          <TimeAxis>
            <span>09:30</span>
            <span>15:00</span>
          </TimeAxis>
        </Charts>

        <Book>
          <BookTabs>
            <BookTab $active>千档</BookTab>
            <BookTab>大单</BookTab>
            <BookTab>分价</BookTab>
          </BookTabs>
          <BookLink>查看千档行情 &gt;</BookLink>
          <BookSide rows={sells} buy={false} />
          <RatioBar />
          <BookSide rows={buys} buy />
          <TradesHead>
            分时成交
            <Triangle $up $w={9} $h={6} $color={GREY} />
          </TradesHead>
          {trades.map(([time, price, dir, amount, color], i) => (
            <TradeRow key={i}>
              <TradeTime>{time}</TradeTime>
              <TradeCell $color={RED}>{price}</TradeCell>
              <span>{dir && <Arrow up={dir === 'up'} color={color} />}</span>
              <TradeCell $color={color}>
                <Mixed text={amount} />
              </TradeCell>
            </TradeRow>
          ))}
        </Book>
      </Market>

      <Queue>
        <QueueSide $first>
          <QueueHead>
            <span>
              <Mixed text="卖1" />
            </span>
            <Tint $color={RED}>24.76</Tint>
            <span>
              <Mixed text="7.9万" />
            </span>
          </QueueHead>
          <QueueList $color={GREEN}>
            <span>2476</span>
            <span>
              <Mixed text="7.7万" />
            </span>
          </QueueList>
        </QueueSide>
        <QueueSide>
          <QueueHead>
            <span>
              <Mixed text="买1" />
            </span>
            <Tint $color={RED}>24.66</Tint>
            <span>
              <Mixed text="4.9万" />
            </span>
          </QueueHead>
          <QueueList $color={RED}>
            <span>
              <Mixed text="4.9万" />
            </span>
          </QueueList>
        </QueueSide>
      </Queue>
      <Spacer />

      <ActionBar>
        <IndexBox>
          <IndexValue>
            <Triangle $up $w={12} $h={7} $color={GREY} />
            17156.81
          </IndexValue>
          <IndexName>
            塑料制品
            <IndexChange>1.10%</IndexChange>
          </IndexName>
        </IndexBox>
        <TradeButton $from="#f4504b" $to="#ec736e">
          买
        </TradeButton>
        <TradeButton $from="#3c76fb" $to="#6f9afd">
          卖
        </TradeButton>
        <Tool $w={87}>
          <ToolIcon>撤</ToolIcon>
          撤单
        </Tool>
        <Tool $w={115}>
          <ToolIcon>
            <svg width="38" height="42" viewBox="0 0 38 42" fill="none" stroke={INK} strokeWidth="3" strokeLinejoin="round">
              <path d="M16.8 2.8Q19 1.6 21.2 2.8L33.6 9.6Q35.8 10.9 35.8 13.4V28.6Q35.8 31.1 33.6 32.4L21.2 39.2Q19 40.4 16.8 39.2L4.4 32.4Q2.2 31.1 2.2 28.6V13.4Q2.2 10.9 4.4 9.6Z" />
              <circle cx="19" cy="21" r="6.4" />
            </svg>
          </ToolIcon>
          设自选
        </Tool>
        <Tool $w={87}>
          <ToolIcon>
            <svg width="30" height="8" viewBox="0 0 30 8" fill={INK}>
              <circle cx="3.6" cy="4" r="3.1" />
              <circle cx="15" cy="4" r="3.1" />
              <circle cx="26.4" cy="4" r="3.1" />
            </svg>
          </ToolIcon>
          更多
        </Tool>
      </ActionBar>

      <Footer>
        <FooterArt width="368" height="157" viewBox="0 27 1104 471" fill="none">
          <g stroke="#fdeadf" strokeWidth="4">
            <path d="M200 27L392 400M375 27L720 330M160 355L560 145L700 85M390 400L600 220M430 498L720 330" />
            <path d="M830 27L700 80M835 27L740 85M840 27L790 85M845 27L830 85M850 27L870 85M855 27L920 85M862 27L1104 140M862 27L985 85M1030 100L1104 190M1030 260L1104 350M840 440V498M945 440L960 498M902 440V498" />
            <path d="M190 330Q420 260 660 300" strokeWidth="3" />
          </g>
          <g fill="#feeadd">
            <path d="M577 95H638V274H613V360H601V274H577ZM601 47H613V95H601Z" />
            <path d="M480 272H541V388H516V470H504V388H480ZM504 216H516V272H504Z" />
            <path d="M383 340H445V498H383ZM407 256H418V340H407Z" />
            <path d="M673 430H736V498H673ZM212 316H226V498H212ZM190 478H248V498H190ZM310 478H320V498H310Z" />
          </g>
        </FooterArt>
        <FooterBrand>
          <FooterLogo>
            <SwooshLogo size={42} />
            东方财富
          </FooterLogo>
          来东方财富，看更多行情信息
        </FooterBrand>
        <QrCard>
          <svg width="107" height="107" viewBox={`0 0 ${QR_SIZE} ${QR_SIZE}`} shapeRendering="crispEdges">
            <path d={qrPath} fill="#000" />
          </svg>
          <QrLogo>
            <SwooshLogo size={22} />
          </QrLogo>
        </QrCard>
      </Footer>
    </Page>
  </>
);

export default App;
